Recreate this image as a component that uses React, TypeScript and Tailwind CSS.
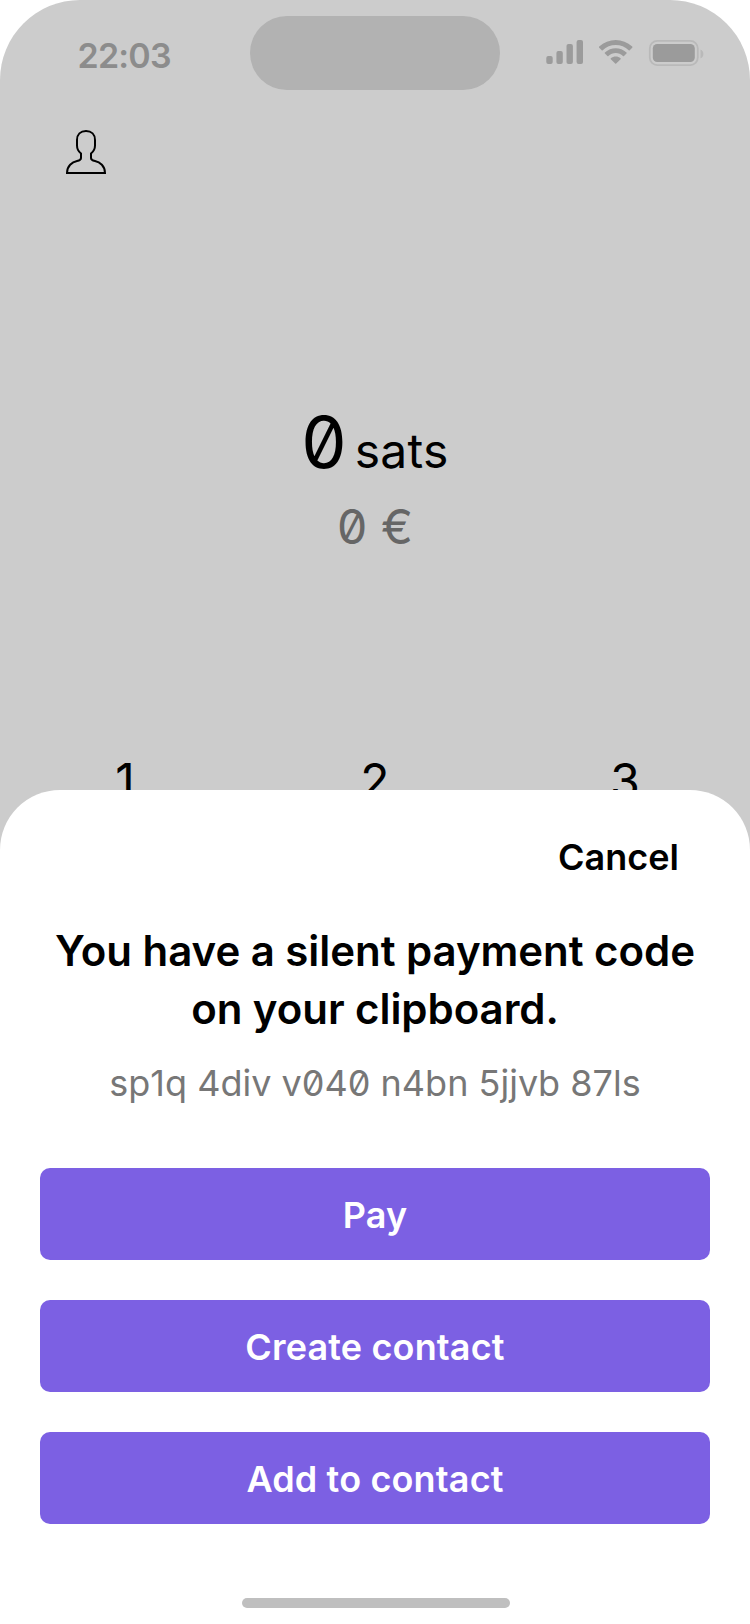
const button = "flex h-[92px] items-center justify-center rounded-[10px] bg-[#7c60e3] pt-[2px] text-[36px] font-semibold text-white tracking-[0.15px]";

function StatusIcons() {
  return (
    <svg width="160" height="30" viewBox="546 38 160 30" fill="#9b9b9b">
      <rect x="546.3" y="56" width="6.4" height="8" rx="2" />
      <rect x="556.4" y="51" width="6.4" height="13" rx="2" />
      <rect x="566.5" y="44" width="6.4" height="20" rx="2" />
      <rect x="576.6" y="40" width="6.4" height="24" rx="2" />
      <path d="M615.7 45C620.6 45 625.2 46.9 628.7 50.2C629 50.5 629.4 50.5 629.7 50.2L632.2 47.7C632.5 47.4 632.5 46.9 632.2 46.6C623 37.8 608.4 37.8 599.2 46.6C598.9 46.9 598.9 47.4 599.2 47.7L601.7 50.2C602 50.5 602.4 50.5 602.7 50.2C606.2 46.9 610.8 45 615.7 45Z" />
      <path d="M615.7 53.1C618.4 53.1 621 54.1 623 56C623.3 56.3 623.7 56.3 624 56L626.5 53.5C626.8 53.2 626.8 52.7 626.5 52.4C620.4 46.7 611 46.7 604.9 52.4C604.6 52.7 604.6 53.2 604.9 53.5L607.4 56C607.7 56.3 608.1 56.3 608.4 56C610.4 54.1 613 53.1 615.7 53.1Z" />
      <path d="M620.6 59.3C620.9 59 620.9 58.5 620.6 58.2C617.8 55.8 613.6 55.8 610.8 58.2C610.5 58.5 610.5 59 610.8 59.3L615.2 63.6C615.5 63.9 615.9 63.9 616.2 63.6Z" />
      <rect x="649.8" y="40.9" width="48" height="24.2" rx="7.5" fill="none" stroke="#b9b9b9" strokeWidth="1.8" />
      <rect x="652.8" y="44" width="42" height="18" rx="4.5" />
      <path d="M700.5 49.5V58.5C704.3 57 704.3 51 700.5 49.5Z" fill="#b9b9b9" />
    </svg>
  );
}

export default function App() {
  return (
    <div className="h-[1624px] w-[750px] bg-white font-['Inter',sans-serif]">
      <div className="relative h-[1624px] overflow-hidden rounded-t-[80px] bg-[#cccccc]">
        <header className="flex h-[106px] items-start justify-between">
          <div className="mt-[36px] w-[250px] pl-[77.5px] text-[34px] leading-[40px] font-semibold tracking-[-0.8px] text-[#8c8c8c]">22:03</div>
          <div className="mt-4 h-[74px] w-[250px] rounded-full bg-[#b2b2b2]" />
          <div className="mt-[38px] flex w-[250px] pl-[46px]">
            <StatusIcons />
          </div>
        </header>
        <main className="flex flex-col">
          <svg className="mt-[22px] ml-[64px]" width="44" height="48" viewBox="64 128 44 48" fill="none" stroke="black" strokeWidth="2">
            <path d="M67 173C67 166 72 162 77 161C80 160.5 81 159.5 81 158V153.5C78.5 151.5 77 149 77 145.5V140C77 134.5 80.5 131 86 131S95 134.5 95 140V145.5C95 149 93.5 151.5 91 153.5V158C91 159.5 92 160.5 95 161C100 162 105 166 105 173Z" />
          </svg>
          <div className="mt-[221px] flex items-baseline justify-center gap-2">
            <span className="text-[72px] leading-[90px] [font-feature-settings:'zero']">0</span>
            <span className="text-[48px] tracking-[0.3px]">sats</span>
          </div>
          <div className="mt-1 text-center text-[48px] leading-[72px] text-[#666666] [font-feature-settings:'zero']">0 €</div>
          <div className="mt-[189px] grid grid-cols-3 text-center text-[48px] leading-[58px]">
            <span>1</span>
            <span>2</span>
            <span>3</span>
          </div>
        </main>
        <section className="absolute inset-x-0 top-[790px] bottom-0 flex flex-col rounded-t-[60px] bg-white px-10">
          <button className="mt-[43px] mr-[31px] self-end text-[36px] leading-[48px] font-semibold">Cancel</button>
          <h1 className="mt-[41px] text-center text-[42px] leading-[58px] font-semibold tracking-[-0.05px]">You have a silent payment code<br />on your clipboard.</h1>
          <p className="mt-[21px] text-center text-[36px] leading-[48px] text-[#777777] [font-feature-settings:'zero'] [font-kerning:none]">sp1q 4div v040 n4bn 5jjvb 87ls</p>
          <div className="mt-[61px] flex flex-col gap-10">
            <button className={button}>Pay</button>
            <button className={button}>Create contact</button>
            <button className={button}>Add to contact</button>
          </div>
          <div className="mt-[74px] ml-[202px] h-[10px] w-[268px] rounded-full bg-[#bfbfbf]" />
        </section>
      </div>
    </div>
  );
}
